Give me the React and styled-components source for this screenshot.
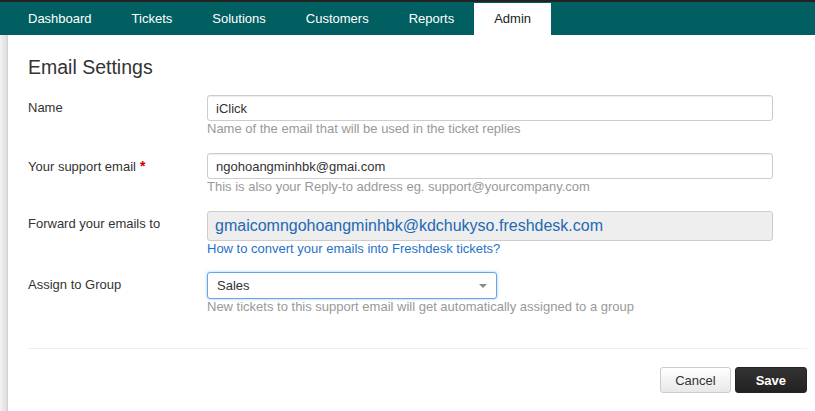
import React from 'react';
import styled, { createGlobalStyle } from 'styled-components';

const GlobalStyle = createGlobalStyle`
body {
  margin: 0;
  background: #fff;
  font-family: "Liberation Sans", Arial, sans-serif;
  color: #333;
}
`

const Page = styled.div`
display: flex;
flex-direction: column;
min-height: 100vh;
`
const TopNav = styled.nav`
display: flex;
height: 33px;
padding-left: 8px;
background: #025f61;
border-top: 2px solid #222;
`
const Tab = styled.a`
display: block;
margin-top: ${props => props.active ? '1px' : '0'};
padding: 0 20px;
height: ${props => props.active ? '32px' : '33px'};
line-height: ${props => props.active ? '32px' : '33px'};
font-size: 13px;
color: ${props => props.active ? '#222' : '#fff'};
background: ${props => props.active ? '#fff' : 'transparent'};
text-decoration: none;
cursor: pointer;
`
const Body = styled.div`
display: flex;
flex: 1;
`
const SideEdge = styled.div`
width: 7px;
flex-shrink: 0;
background: linear-gradient(to right, #f3f3f3, #dddddd);
border-right: 1px solid #d2d2d2;
`
const Content = styled.div`
flex: 1;
padding: 21px 8px 0 20px;
`
const Title = styled.h1`
margin: 0 0 17px;
font-size: 19.5px;
line-height: 22px;
font-weight: normal;
color: #333;
`
const Row = styled.div`
display: grid;
grid-template-columns: 179px 566px;
margin-bottom: ${props => props.gap || 17}px;
`
const Label = styled.label`
font-size: 13px;
line-height: 26px;
color: #333;
`
const Required = styled.span`
color: #c00;
font-weight: bold;
font-size: 14px;
margin-left: 4px;
`
const Field = styled.div`
display: flex;
flex-direction: column;
`
const Input = styled.input`
box-sizing: border-box;
width: 100%;
height: 26px;
padding: 0 8px;
font-family: inherit;
font-size: 13px;
color: #333;
background: #fff;
border: 1px solid #ccc;
border-radius: 3px;
box-shadow: inset 0 1px 1px rgba(0, 0, 0, 0.075);
outline: none;
`
const ReadOnlyBox = styled.div`
box-sizing: border-box;
height: 30px;
padding: 0 7px;
font-size: 16px;
line-height: 28px;
color: #2469b3;
background: #eee;
border: 1px solid #ccc;
border-radius: 3px;
`
const Help = styled.div`
font-size: 13px;
line-height: 15px;
color: #999;
`
const HelpLink = styled.a`
font-size: 13px;
line-height: 15px;
color: #1f72c7;
text-decoration: none;
cursor: pointer;
`
const Select = styled.div`
box-sizing: border-box;
display: flex;
align-items: center;
justify-content: space-between;
width: 290px;
height: 27px;
padding: 0 9px 0 9px;
font-size: 13px;
color: #333;
background: #fff;
border: 1px solid #66a3ee;
border-radius: 3px;
box-shadow: 0 0 3px rgba(102, 160, 233, 0.6);
`
const Caret = styled.span`
width: 0;
height: 0;
border-left: 4px solid transparent;
border-right: 4px solid transparent;
border-top: 4px solid #888;
`
const Divider = styled.hr`
margin: 0;
border: 0;
border-top: 1px solid #eee;
`
const Actions = styled.div`
display: flex;
justify-content: flex-end;
gap: 4px;
margin-top: 18px;
`
const Button = styled.button`
box-sizing: border-box;
height: 26px;
padding: 0 ${props => props.primary ? '20px' : '14px'};
font-family: inherit;
font-size: 13px;
font-weight: ${props => props.primary ? 'bold' : 'normal'};
color: ${props => props.primary ? '#fff' : '#333'};
background: ${props => props.primary ? 'linear-gradient(#333, #222)' : 'linear-gradient(#fff, #e8e8e8)'};
border: 1px solid ${props => props.primary ? '#222' : '#ccc'};
border-radius: 3px;
cursor: pointer;
`

const tabs = ['Dashboard', 'Tickets', 'Solutions', 'Customers', 'Reports', 'Admin'];

function App() {
    return (
        <Page>
            <GlobalStyle />
            <TopNav>
                {tabs.map(t => <Tab key={t} active={t === 'Admin'}>{t}</Tab>)}
            </TopNav>
            <Body>
                <SideEdge />
                <Content>
                    <Title>Email Settings</Title>
                    <Row>
                        <Label>Name</Label>
                        <Field>
                            <Input defaultValue="iClick" />
                            <Help>Name of the email that will be used in the ticket replies</Help>
                        </Field>
                    </Row>
                    <Row>
                        <Label>Your support email<Required>*</Required></Label>
                        <Field>
                            <Input defaultValue="ngohoangminhbk@gmai.com" />
                            <Help>This is also your Reply-to address eg. support@yourcompany.com</Help>
                        </Field>
                    </Row>
                    <Row gap={16}>
                        <Label>Forward your emails to</Label>
                        <Field>
                            <ReadOnlyBox>gmaicomngohoangminhbk@kdchukyso.freshdesk.com</ReadOnlyBox>
                            <HelpLink>How to convert your emails into Freshdesk tickets?</HelpLink>
                        </Field>
                    </Row>
                    <Row gap={34}>
                        <Label>Assign to Group</Label>
                        <Field>
                            <Select>Sales<Caret /></Select>
                            <Help>New tickets to this support email will get automatically assigned to a group</Help>
                        </Field>
                    </Row>
                    <Divider />
                    <Actions>
                        <Button>Cancel</Button>
                        <Button primary>Save</Button>
                    </Actions>
                </Content>
            </Body>
        </Page>
    );
}

export default App;
